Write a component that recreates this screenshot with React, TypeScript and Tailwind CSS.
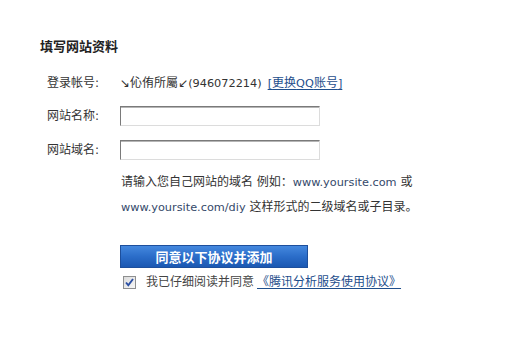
import React from "react";

const FONT = '"DejaVu Sans", "Noto Sans CJK SC", sans-serif';

function L({ children, className = "" }: { children: React.ReactNode; className?: string }) {
  return <span className={"text-[11.3px] " + className}>{children}</span>;
}

function Input() {
  return (
    <div className="w-[200px] h-[20px] bg-white border border-t-[#7a7a7a] border-l-[#7a7a7a] border-r-[#dcdcdc] border-b-[#dcdcdc] shadow-[inset_0_1px_0_#b5b5b5]" />
  );
}

export default function App() {
  return (
    <div
      className="w-[522px] h-[346px] bg-white text-[#333] text-[12px] pl-[40px] pt-[38px] flex flex-col"
      style={{ fontFamily: FONT }}
    >
      <div
        className="text-[13px] leading-[16px] font-bold text-[#222]"
        style={{ fontFamily: '"Noto Sans CJK SC", sans-serif' }}
      >
        填写网站资料
      </div>

      <div className="mt-[21px] flex items-center h-[16px] leading-[16px]">
        <div className="ml-[7px] w-[73px]">登录帐号:</div>
        <div className="flex items-center">
          <span className="text-[#333]">
            ↘伈侑所屬↙<L>(946072214)</L>
          </span>
          <a className="ml-[6px] text-[#1e4e8c] underline underline-offset-2 cursor-pointer">
            <L>[</L>更换<L>QQ</L>账号<L>]</L>
          </a>
        </div>
      </div>

      <div className="mt-[15px] flex items-center h-[20px]">
        <div className="ml-[7px] w-[73px]">网站名称:</div>
        <Input />
      </div>

      <div className="mt-[14px] flex items-center h-[20px]">
        <div className="ml-[7px] w-[73px]">网站域名:</div>
        <Input />
      </div>

      <div className="mt-[10px] ml-[81px] leading-[25px] whitespace-nowrap">
        请输入您自己网站的域名 例如：
        <L className="text-[#34496a]">www.yoursite.com</L> 或
        <br />
        <L className="text-[#34496a]">www.yoursite.com/diy</L>{" "}
        这样形式的二级域名或子目录。
      </div>

      <div className="mt-[25px] ml-[80px]">
        <button
          className="w-[188px] h-[23px] border border-[#1d4f9c] bg-gradient-to-b from-[#4488de] via-[#2b6dc9] to-[#1b58b2] text-white text-[13px] font-bold leading-[21px]"
          style={{ fontFamily: '"Noto Sans CJK SC", sans-serif' }}
        >
          同意以下协议并添加
        </button>
      </div>

      <div className="mt-[6px] ml-[83px] flex items-center h-[16px] leading-[16px]">
        <div className="w-[13px] h-[13px] border border-[#8e8f8f] bg-gradient-to-br from-[#dcdcdc] to-[#f7f7f7] flex items-center justify-center">
          <svg width="11" height="11" viewBox="0 0 11 11">
            <path
              d="M2 5.5 L4.3 8.2 L9 2"
              fill="none"
              stroke="#2b4fa3"
              strokeWidth="1.9"
            />
          </svg>
        </div>
        <span className="ml-[10px] text-[#444]">我已仔细阅读并同意</span>
        <a className="ml-[3px] text-[#1e4e8c] underline underline-offset-2 cursor-pointer">
          《腾讯分析服务使用协议》
        </a>
      </div>
    </div>
  );
}
